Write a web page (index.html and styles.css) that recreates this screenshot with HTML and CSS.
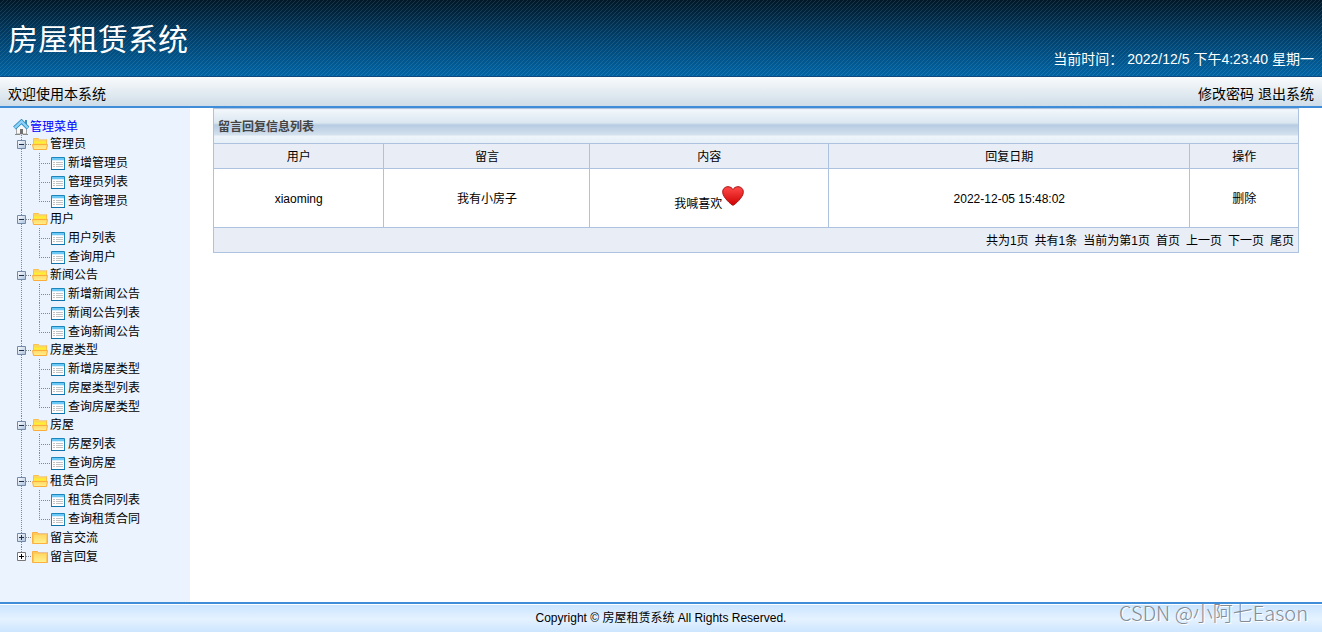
FILE: index.html
```html
<!DOCTYPE html>
<html lang="zh-CN">
<head>
<meta charset="utf-8">
<title>房屋租赁系统</title>
<link rel="stylesheet" href="styles.css">
</head>
<body>
<svg class="sprite" aria-hidden="true">
  <defs>
    <linearGradient id="gold" x1="0" y1="0" x2="0" y2="1"><stop offset="0" stop-color="#ffd966"/><stop offset="1" stop-color="#fff08c"/></linearGradient>
    <linearGradient id="steel" x1="0" y1="0" x2="1" y2="1"><stop offset="0" stop-color="#fff"/><stop offset="1" stop-color="#a9bfdb"/></linearGradient>
    <linearGradient id="love" x1="0" y1="0" x2="0" y2="1"><stop offset="0" stop-color="#ff4a4a"/><stop offset="1" stop-color="#cf0000"/></linearGradient>
  </defs>
  <symbol id="home" viewBox="0 0 16 16">
    <path d="M3.500 8L8.500 4L13.500 8v7h-10z" fill="#f8f8f8" stroke="#a5a5a5"/>
    <path d="M7 10h3v5H7z" fill="#707070"/>
    <path d="M12 1h2v5h-2z" fill="#3c8fbd"/>
    <path d="M1.500 9L8.500 2.500L15 9" fill="none" stroke="#2887bf" stroke-width="4"/>
    <path d="M1.700 8.800L8.500 2.500L14.800 8.800" fill="none" stroke="#8bd3f6" stroke-width="2.400"/>
    <path d="M2 15.500h5M10 15.500h5" stroke="#888"/>
  </symbol>
  <symbol id="open" viewBox="0 0 16 14">
    <path d="M1.500 12V1.500h5l1 1h7V12z" fill="#ffd65c" stroke="#fbc04f"/>
    <path d="M7 2.500h7" stroke="#ecd2a4"/>
    <path d="M2 5.500h12" stroke="#fff02e" stroke-width="2"/>
    <path d="M.5 7.500h15l-1 5h-13z" fill="url(#gold)" stroke="#fbae3c"/>
  </symbol>
  <symbol id="closed" viewBox="0 0 16 14">
    <path d="M.5 12.500v-11h5l1 1h9v10z" fill="#ffc85a" stroke="#fbb040"/>
    <path d="M2 4h12v8H2z" fill="url(#gold)"/>
    <path d="M7 2.500h8" stroke="#e5c3a0"/>
  </symbol>
  <symbol id="page" viewBox="0 0 14 13">
    <path d="M.5.5h13v12H.5z" fill="#fff" stroke="#1c87bd"/>
    <path d="M1 1h12v2H1z" fill="#6cc9f5"/>
    <path d="M1 3.500h12" stroke="#d9eefa"/>
    <path d="M2 5.500h2M5 5.500h7M2 7.500h2M5 7.500h7M2 9.500h2M5 9.500h7" stroke="#c3c3c3"/>
    <path d="M0 12.500h14" stroke="#0f72a8"/>
  </symbol>
  <symbol id="minus" viewBox="0 0 9 9">
    <path d="M.5.5h8v8h-8z" fill="url(#steel)" stroke="#7389a8"/>
    <path d="M2 4.500h5" stroke="#1d2f4d"/>
  </symbol>
  <symbol id="plus" viewBox="0 0 9 9">
    <path d="M.5.5h8v8h-8z" fill="url(#steel)" stroke="#7389a8"/>
    <path d="M2 4.500h5M4.500 2v5" stroke="#1d2f4d"/>
  </symbol>
  <symbol id="plus-plain" viewBox="0 0 9 9">
    <path d="M.5.5h8v8h-8z" fill="#fff" stroke="#777"/>
    <path d="M2 4.500h5M4.500 2v5" stroke="#000"/>
  </symbol>
</svg>

<header class="banner">
  <h1 class="banner-title">房屋租赁系统</h1>
  <p class="clock">当前时间： 2022/12/5 下午4:23:40 星期一</p>
</header>
<div class="toolbar">
  <span>欢迎使用本系统</span>
  <nav><a href="#">修改密码</a> <a href="#">退出系统</a></nav>
</div>

<div class="body">
  <nav class="sidebar">
    <a class="root" href="#"><svg class="home"><use href="#home"/></svg>管理菜单</a>
    <ul class="tree">
      <li class="group">
        <button class="node"><svg class="toggle"><use href="#minus"/></svg><svg class="folder"><use href="#open"/></svg>管理员</button>
        <ul class="leaves">
          <li class="leaf"><a href="#"><svg class="page"><use href="#page"/></svg>新增管理员</a></li>
          <li class="leaf"><a href="#"><svg class="page"><use href="#page"/></svg>管理员列表</a></li>
          <li class="leaf"><a href="#"><svg class="page"><use href="#page"/></svg>查询管理员</a></li>
        </ul>
      </li>
      <li class="group">
        <button class="node"><svg class="toggle"><use href="#minus"/></svg><svg class="folder"><use href="#open"/></svg>用户</button>
        <ul class="leaves">
          <li class="leaf"><a href="#"><svg class="page"><use href="#page"/></svg>用户列表</a></li>
          <li class="leaf"><a href="#"><svg class="page"><use href="#page"/></svg>查询用户</a></li>
        </ul>
      </li>
      <li class="group">
        <button class="node"><svg class="toggle"><use href="#minus"/></svg><svg class="folder"><use href="#open"/></svg>新闻公告</button>
        <ul class="leaves">
          <li class="leaf"><a href="#"><svg class="page"><use href="#page"/></svg>新增新闻公告</a></li>
          <li class="leaf"><a href="#"><svg class="page"><use href="#page"/></svg>新闻公告列表</a></li>
          <li class="leaf"><a href="#"><svg class="page"><use href="#page"/></svg>查询新闻公告</a></li>
        </ul>
      </li>
      <li class="group">
        <button class="node"><svg class="toggle"><use href="#minus"/></svg><svg class="folder"><use href="#open"/></svg>房屋类型</button>
        <ul class="leaves">
          <li class="leaf"><a href="#"><svg class="page"><use href="#page"/></svg>新增房屋类型</a></li>
          <li class="leaf"><a href="#"><svg class="page"><use href="#page"/></svg>房屋类型列表</a></li>
          <li class="leaf"><a href="#"><svg class="page"><use href="#page"/></svg>查询房屋类型</a></li>
        </ul>
      </li>
      <li class="group">
        <button class="node"><svg class="toggle"><use href="#minus"/></svg><svg class="folder"><use href="#open"/></svg>房屋</button>
        <ul class="leaves">
          <li class="leaf"><a href="#"><svg class="page"><use href="#page"/></svg>房屋列表</a></li>
          <li class="leaf"><a href="#"><svg class="page"><use href="#page"/></svg>查询房屋</a></li>
        </ul>
      </li>
      <li class="group">
        <button class="node"><svg class="toggle"><use href="#minus"/></svg><svg class="folder"><use href="#open"/></svg>租赁合同</button>
        <ul class="leaves">
          <li class="leaf"><a href="#"><svg class="page"><use href="#page"/></svg>租赁合同列表</a></li>
          <li class="leaf"><a href="#"><svg class="page"><use href="#page"/></svg>查询租赁合同</a></li>
        </ul>
      </li>
      <li class="group">
        <button class="node collapsed"><svg class="toggle"><use href="#plus"/></svg><svg class="folder"><use href="#closed"/></svg>留言交流</button>
      </li>
      <li class="group">
        <button class="node collapsed"><svg class="toggle"><use href="#plus-plain"/></svg><svg class="folder"><use href="#closed"/></svg>留言回复</button>
      </li>
    </ul>
  </nav>

  <main class="content">
    <table class="grid">
      <colgroup><col class="c-user"><col class="c-msg"><col class="c-reply"><col class="c-date"><col class="c-act"></colgroup>
      <thead>
        <tr class="title-row"><th colspan="5">留言回复信息列表</th></tr>
        <tr class="head-row"><th>用户</th><th>留言</th><th>内容</th><th>回复日期</th><th>操作</th></tr>
      </thead>
      <tbody>
        <tr class="data-row">
          <td>xiaoming</td>
          <td>我有小房子</td>
          <td><span class="reply">我喊喜欢<svg class="heart" viewBox="0 0 22 20"><path d="M11 19.300C9 18.500 1 11.500.7 6.500C.4 3 3 .7 6 .7C8.500.7 10 2 11 3.500C12 2 13.500.7 16 .7C19 .7 21.600 3 21.300 6.500C21 11.500 13 18.500 11 19.300Z" fill="url(#love)" stroke="#a81010"/></svg></span></td>
          <td>2022-12-05 15:48:02</td>
          <td><a href="#">删除</a></td>
        </tr>
      </tbody>
      <tfoot>
        <tr class="foot-row"><td colspan="5">
          <div class="pager"><span>共为1页</span><span>共有1条</span><span>当前为第1页</span><a href="#">首页</a><a href="#">上一页</a><a href="#">下一页</a><a href="#">尾页</a></div>
        </td></tr>
      </tfoot>
    </table>
  </main>
</div>

<footer class="footer">
  Copyright © 房屋租赁系统 All Rights Reserved.
  <span class="watermark">CSDN @小阿七Eason</span>
</footer>
</body>
</html>
```

FILE: styles.css
```css
* { box-sizing: border-box; }

body {
  margin: 0;
  min-height: 100vh;
  display: flex;
  flex-direction: column;
  font: 12px/18px "Liberation Sans", "Noto Sans CJK SC", sans-serif;
  color: #000;
  background: #fff;
}

a { color: inherit; text-decoration: none; }
ul { list-style: none; margin: 0; padding: 0; }
svg { flex: none; }
.sprite { position: absolute; width: 0; height: 0; }

.banner {
  height: 77px;
  padding: 0 8px;
  display: flex;
  justify-content: space-between;
  color: #fff;
  border-bottom: 1px solid #0b4a82;
  background:
    linear-gradient(135deg, transparent 37%, rgba(255,255,255,.1) 50%, transparent 63%) 0 0 / 4px 4px,
    linear-gradient(#001828, #00406c 50%, #0064a4);
}
.banner-title { margin: 0; font-size: 30px; line-height: 80px; font-weight: 400; }
.clock { margin: 0; align-self: flex-end; padding-bottom: 7px; font-size: 14px; line-height: 20px; }

.toolbar {
  height: 31px;
  padding: 0 8px;
  display: flex;
  justify-content: space-between;
  font-size: 14px;
  line-height: 34px;
  border-bottom: 2px solid #3f8cd8;
  background: linear-gradient(#f9fbfc, #cfdde8);
}

.body { flex: 1; display: flex; }

.sidebar { width: 190px; flex: none; padding: 10px 0 0 13px; background: #ebf3ff; }
.root { display: flex; align-items: center; height: 17px; color: #00f; }
.home { width: 16px; height: 16px; margin-right: 1px; }

/* dotted guides joining the toggles and the leaves */
.group { background: repeating-linear-gradient(#808890 0 1px, transparent 1px 2px) 8px 0 / 1px 100% no-repeat; }
.group:last-child { background-size: 1px 9px; }
.node {
  display: flex;
  align-items: center;
  height: 18px;
  width: 100%;
  padding: 0 0 0 4px;
  border: 0;
  font: inherit;
  text-align: left;
  color: inherit;
  background: repeating-linear-gradient(90deg, #808890 0 1px, transparent 1px 2px) 13px 9px / 6px 1px no-repeat;
}
.collapsed { height: 19px; }
.toggle { width: 9px; height: 9px; margin-right: 6px; }
.folder { width: 16px; height: 14px; margin-right: 2px; }
.leaf {
  height: 19px;
  padding-left: 38px;
  background:
    repeating-linear-gradient(#808890 0 1px, transparent 1px 2px) 26px 0 / 1px 100% no-repeat,
    repeating-linear-gradient(90deg, #808890 0 1px, transparent 1px 2px) 26px 10px / 12px 1px no-repeat;
}
.leaf:last-child { background-size: 1px 10px, 12px 1px; }
.leaf a { display: flex; align-items: center; height: 19px; }
.page { width: 14px; height: 13px; margin-right: 3px; margin-top: 1px; }

.content { flex: 1; padding: 0 23px; }
.grid { width: 100%; table-layout: fixed; border-collapse: collapse; border: 1px solid #adc2de; }
.grid th, .grid td { padding: 2px 0 0; border: 1px solid #adc2de; text-align: center; font-weight: 400; }
.c-user { width: 15.7%; }
.c-msg { width: 19%; }
.c-reply { width: 22%; }
.c-date { width: 33.3%; }
.c-act { width: 10%; }
.grid .title-row th {
  height: 35px;
  padding-left: 4px;
  text-align: left;
  font-weight: 700;
  color: #444;
  background: linear-gradient(#f2f7fb 0, #d9e6f0 14px, #b5cae2 15px, #d6e2ee 26px, #eff5fb 26px, #e4edf6) 0 0 / 100% 35px;
}
.head-row, .foot-row { height: 25px; background: #e9eef6; }
.data-row { height: 59px; }
.reply { display: inline-flex; align-items: flex-end; }
.heart { width: 22px; height: 20px; margin-bottom: 7px; }
.pager { display: flex; justify-content: flex-end; gap: 6px; padding-right: 4px; }

.footer {
  position: relative;
  height: 30px;
  border-top: 2px solid #3f8cd8;
  text-align: center;
  line-height: 28px;
  background: linear-gradient(#fff 0 1px, #cbe5ff 1px, #e5f2ff 15px, #cde6ff);
}
.watermark {
  position: absolute;
  right: 14px;
  top: -5px;
  font-family: "Noto Sans CJK SC", sans-serif;
  font-weight: 300;
  font-size: 20px;
  color: #838c95;
  text-shadow: 1px 1px #fff;
}
```
